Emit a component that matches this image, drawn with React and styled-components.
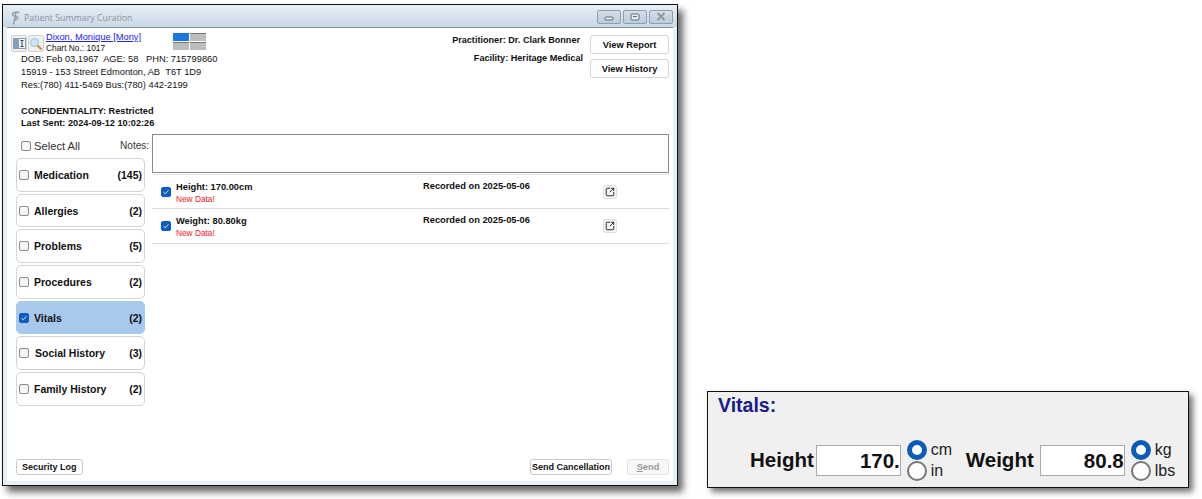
import React from 'react'
import styled, { createGlobalStyle } from 'styled-components';
import { SquareArrowOutUpRight } from 'lucide-react';

const categories = [
	{ name: 'Medication', count: 145 },
	{ name: 'Allergies', count: 2 },
	{ name: 'Problems', count: 5 },
	{ name: 'Procedures', count: 2 },
	{ name: 'Vitals', count: 2, active: true },
	{ name: 'Social History', count: 3, nudge: true },
	{ name: 'Family History', count: 2 },
];

const vitals = [
	{ label: 'Height: 170.00cm', date: 'Recorded on 2025-05-06' },
	{ label: 'Weight: 80.80kg', date: 'Recorded on 2025-05-06' },
];

const Check = ({ checked }) => (
	<CheckBox $checked={checked}>
		{checked && (
			<svg width="8" height="8" viewBox="0 0 8 8">
				<path d="M1.5 4.2 L3.2 5.8 L6.5 2.2" fill="none" stroke="#cfe0f5" strokeWidth="1" />
			</svg>
		)}
	</CheckBox>
);

const App = () => {
	return (
		<Page>
			<GlobalStyle />
			<Window>
				<TitleBar>
					<TitleLeft>
						<svg width="11" height="14" viewBox="0 0 11 14">
							<path d="M9.5 1.5 C5 0.5 1.5 2 2.5 4 C3.5 6 8 5 8 7 C8 8.5 5 8 4 9.5 M6 2 L3.5 13.5" fill="none" stroke="#8c959d" strokeWidth="1.3" />
						</svg>
						<TitleText>Patient Summary Curation</TitleText>
					</TitleLeft>
					<WindowButtons>
						<WindowButton>
							<svg width="10" height="8" viewBox="0 0 10 8"><rect x="1" y="4" width="8" height="3" rx="1" fill="#e8eef3" stroke="#5f6b75" /></svg>
						</WindowButton>
						<WindowButton>
							<svg width="10" height="8" viewBox="0 0 10 8"><rect x="1" y="1" width="8" height="6" rx="1" fill="#e8eef3" stroke="#5f6b75" /><rect x="3" y="3" width="4" height="1" fill="#5f6b75" /></svg>
						</WindowButton>
						<WindowButton>
							<svg width="10" height="9" viewBox="0 0 10 9"><path d="M1.5 1 L8.5 8 M8.5 1 L1.5 8" stroke="#8d979f" strokeWidth="2" /></svg>
						</WindowButton>
					</WindowButtons>
				</TitleBar>
				<Content>
					<Header>
						<PatientColumn>
							<NameRow>
								<IconButton>
									<svg width="13" height="13" viewBox="0 0 13 13">
										<rect x="0.5" y="1.5" width="5" height="10" fill="#7f9fc4" stroke="#8c9cad" />
										<rect x="5.5" y="1.5" width="7" height="10" fill="#f2f4f6" stroke="#8c9cad" />
										<path d="M7.5 3.5 H10.5 M9 3.5 V9.5 M7.5 9.5 H10.5" stroke="#33475c" />
									</svg>
								</IconButton>
								<IconButton>
									<svg width="14" height="14" viewBox="0 0 14 14">
										<circle cx="5.5" cy="5.5" r="4" fill="#cfe6f8" stroke="#9dbcd8" />
										<path d="M8.5 8.5 L12.5 12.5" stroke="#c98a3c" strokeWidth="2" />
									</svg>
								</IconButton>
								<NameBlock>
									<PatientName>Dixon, Monique [Mony]</PatientName>
									<ChartNo>Chart No.: 1017</ChartNo>
								</NameBlock>
								<LayoutPicker>
									<LayoutCell $on />
									<LayoutCell />
									<LayoutCell />
									<LayoutCell />
								</LayoutPicker>
							</NameRow>
							<Demographics>
								<div>DOB: Feb 03,1967&nbsp; AGE: 58 &nbsp; PHN: 715799860</div>
								<div>15919 - 153 Street Edmonton, AB &nbsp;T6T 1D9</div>
								<div>Res:(780) 411-5469 Bus:(780) 442-2199</div>
							</Demographics>
							<Confidential>
								<div>CONFIDENTIALITY: Restricted</div>
								<div>Last Sent: 2024-09-12 10:02:26</div>
							</Confidential>
						</PatientColumn>
						<ProviderColumn>
							<ProviderLine>Practitioner: Dr. Clark Bonner</ProviderLine>
							<ProviderLine $shift>Facility: Heritage Medical</ProviderLine>
						</ProviderColumn>
						<HeaderButtons>
							<HeaderButton>View Report</HeaderButton>
							<HeaderButton>View History</HeaderButton>
						</HeaderButtons>
					</Header>
					<Main>
						<Sidebar>
							<SelectAll>
								<Check />
								<span>Select All</span>
							</SelectAll>
							<CategoryList>
								{categories.map((cat) => (
									<CategoryCard key={cat.name} $active={cat.active}>
										<Check checked={cat.active} />
										<CategoryName $nudge={cat.nudge}>{cat.name}</CategoryName>
										<CategoryCount>({cat.count})</CategoryCount>
									</CategoryCard>
								))}
							</CategoryList>
						</Sidebar>
						<Detail>
							<NotesRow>
								<NotesLabel>Notes:</NotesLabel>
								<NotesBox />
							</NotesRow>
							<VitalList>
								{vitals.map((item) => (
									<VitalRow key={item.label}>
										<Check checked />
										<VitalInfo>
											<VitalLabel>{item.label}</VitalLabel>
											<NewData>New Data!</NewData>
										</VitalInfo>
										<VitalDate>{item.date}</VitalDate>
										<OpenButton>
											<SquareArrowOutUpRight size={10} strokeWidth={2.2} color="#222" />
										</OpenButton>
									</VitalRow>
								))}
							</VitalList>
						</Detail>
					</Main>
					<Footer>
						<FooterButton $pad={5}>Security Log</FooterButton>
						<FooterRight>
							<FooterButton $pad={1}>Send Cancellation</FooterButton>
							<SendButton disabled><u>S</u>end</SendButton>
						</FooterRight>
					</Footer>
				</Content>
			</Window>
			<VitalsPanel>
				<VitalsTitle>Vitals:</VitalsTitle>
				<Measures>
					<Measure>
						<MeasureLabel $gap={2}>Height</MeasureLabel>
						<MeasureInput>170.</MeasureInput>
						<UnitGroup>
							<Unit><Radio $on />cm</Unit>
							<Unit><Radio />in</Unit>
						</UnitGroup>
					</Measure>
					<Measure>
						<MeasureLabel $gap={6}>Weight</MeasureLabel>
						<MeasureInput>80.8</MeasureInput>
						<UnitGroup>
							<Unit><Radio $on />kg</Unit>
							<Unit><Radio />lbs</Unit>
						</UnitGroup>
					</Measure>
				</Measures>
			</VitalsPanel>
		</Page>
	);
}

export default App


const GlobalStyle = createGlobalStyle`
	html, body {
		margin: 0;
		background: #fff;
		overflow: hidden;
	}
	body, button {
		font-family: "Liberation Sans", Arial, sans-serif;
		color: #111;
	}
`;

const Page = styled.div`
	width: 1202px;
	height: 499px;
	display: flex;
	align-items: flex-start;
	padding: 4px 0 0 2px;
	box-sizing: border-box;
	background: #fff;
`;

const Window = styled.div`
	width: 676px;
	height: 482px;
	box-sizing: border-box;
	flex-shrink: 0;
	border: 1px solid #111;
	background: #e6eef6;
	box-shadow: 5px 6px 7px rgba(0, 0, 0, 0.6);
	display: flex;
	flex-direction: column;
	padding: 0 4px 4px;
`;

const TitleBar = styled.div`
	height: 22px;
	margin: 0 -4px;
	padding: 0 4px 0 7px;
	flex-shrink: 0;
	display: flex;
	align-items: center;
	justify-content: space-between;
	background: linear-gradient(#e9eff4, #c8d8e6);
`;

const TitleLeft = styled.div`
	display: flex;
	align-items: center;
	gap: 3px;
	margin-top: 3px;
`;

const TitleText = styled.span`
	font-family: "Open Sans", sans-serif;
	font-size: 8.8px;
	color: #8b959e;
`;

const WindowButtons = styled.div`
	display: flex;
	gap: 2px;
	margin-top: 1px;
`;

const WindowButton = styled.div`
	width: 24px;
	height: 14px;
	box-sizing: border-box;
	border: 1px solid #8b9db0;
	border-radius: 2px;
	background: linear-gradient(#d3dfe9, #bccddc);
	display: flex;
	align-items: center;
	justify-content: center;
`;

const Content = styled.div`
	flex: 1;
	min-height: 0;
	background: #fff;
	border-top: 1px solid #7f8c98;
	display: flex;
	flex-direction: column;
	padding: 0 4px 5px 3px;
`;

const Header = styled.div`
	display: flex;
	height: 106px;
	flex-shrink: 0;
`;

const PatientColumn = styled.div`
	flex: 1;
`;

const NameRow = styled.div`
	display: flex;
	align-items: flex-start;
	padding: 5px 0 0 1px;
	height: 24px;
	box-sizing: border-box;
`;

const IconButton = styled.div`
	width: 16px;
	height: 17px;
	box-sizing: border-box;
	margin-top: 2px;
	margin-right: 1px;
	border: 1px solid #d0d0d0;
	border-radius: 2px;
	background: #f0f0f0;
	display: flex;
	align-items: center;
	justify-content: center;
`;

const NameBlock = styled.div`
	width: 127px;
	margin: -1px 0 0 1px;
	line-height: 11px;
`;

const PatientName = styled.a`
	display: block;
	color: #2222ee;
	text-decoration: underline;
	font-size: 9.3px;
`;

const ChartNo = styled.div`
	font-size: 8.4px;
`;

const LayoutPicker = styled.div`
	display: grid;
	grid-template-columns: 16px 16px;
	grid-auto-rows: 8px;
	gap: 1px 1px;
`;

const LayoutCell = styled.div`
	background: ${({ $on }) => ($on ? '#1a78e0' : '#bdbdbd')};
	border-top: 1px solid ${({ $on }) => ($on ? '#1a78e0' : '#777')};
`;

const Demographics = styled.div`
	margin: 1px 0 0 11px;
	line-height: 13px;
	font-size: 9.3px;
	white-space: nowrap;
`;

const Confidential = styled.div`
	margin: 13px 0 0 11px;
	line-height: 12px;
	font-size: 9.2px;
	font-weight: bold;
`;

const ProviderColumn = styled.div`
	display: flex;
	flex-direction: column;
	align-items: flex-end;
	font-size: 9.1px;
	font-weight: bold;
	padding-top: 7px;
	margin-right: 7px;
	gap: 7px;
`;

const ProviderLine = styled.div`
	line-height: 11px;
	margin-right: ${({ $shift }) => ($shift ? '0' : '3px')};
`;

const HeaderButtons = styled.div`
	display: flex;
	flex-direction: column;
	gap: 5px;
	padding-top: 7px;
`;

const HeaderButton = styled.button`
	width: 79px;
	height: 19px;
	padding: 0;
	border: 1px solid #d4d4d4;
	border-radius: 3px;
	background: #fff;
	font-size: 9.3px;
	font-weight: bold;
`;

const Main = styled.div`
	flex: 1;
	min-height: 0;
	display: flex;
`;

const Sidebar = styled.div`
	width: 129px;
	margin-left: 6px;
	flex-shrink: 0;
`;

const SelectAll = styled.div`
	display: flex;
	align-items: center;
	gap: 3px;
	height: 24px;
	padding: 0 0 1px 5px;
	box-sizing: border-box;
	font-size: 11.2px;
	color: #333;
`;

const CategoryList = styled.div`
	display: flex;
	flex-direction: column;
	gap: 2px;
`;

const CategoryCard = styled.div`
	height: 33.7px;
	box-sizing: border-box;
	padding: 0 2px;
	display: flex;
	align-items: center;
	border: 1px solid ${({ $active }) => ($active ? '#a8c9ee' : '#d4d4d4')};
	border-radius: 5px;
	background: ${({ $active }) => ($active ? '#a8c9ee' : '#fff')};
	font-size: 10.5px;
	font-weight: bold;
`;

const CategoryName = styled.span`
	flex: 1;
	margin-left: ${({ $nudge }) => ($nudge ? '6px' : '5px')};
`;

const CategoryCount = styled.span``;

const CheckBox = styled.span`
	width: 10px;
	height: 10px;
	flex-shrink: 0;
	box-sizing: border-box;
	border-radius: 2px;
	border: 1px solid ${({ $checked }) => ($checked ? '#0f5cc0' : '#8a8a8a')};
	background: ${({ $checked }) => ($checked ? '#0f5cc0' : '#f6f6f6')};
	display: inline-flex;
	align-items: center;
	justify-content: center;
`;

const Detail = styled.div`
	flex: 1;
	min-width: 0;
	margin-left: -25px;
	display: flex;
	flex-direction: column;
`;

const NotesRow = styled.div`
	display: flex;
	align-items: flex-start;
	height: 40px;
	flex-shrink: 0;
`;

const NotesLabel = styled.label`
	width: 32px;
	font-size: 10px;
	color: #333;
	margin-top: 6px;
	text-align: right;
	padding-right: 3px;
	margin-left: -3px;
`;

const NotesBox = styled.div`
	flex: 1;
	height: 39px;
	box-sizing: border-box;
	border: 1px solid #8a8a8a;
`;

const VitalList = styled.div`
	margin-left: 32px;
	border-top: 1px solid #e4e4e4;
`;

const VitalRow = styled.div`
	height: 34.25px;
	box-sizing: border-box;
	padding: 0 52px 0 9px;
	display: flex;
	align-items: center;
	border-bottom: 1px solid #dcdcdc;
`;

const VitalInfo = styled.div`
	width: 247px;
	margin-left: 5px;
	padding-top: 2px;
`;

const VitalLabel = styled.div`
	font-size: 9.3px;
	font-weight: bold;
	line-height: 12px;
`;

const NewData = styled.div`
	font-size: 8.3px;
	line-height: 12px;
	color: #f0202a;
`;

const VitalDate = styled.div`
	flex: 1;
	font-size: 9.3px;
	font-weight: bold;
	line-height: 12px;
	margin-bottom: 11px;
`;

const OpenButton = styled.div`
	width: 14px;
	height: 14px;
	box-sizing: border-box;
	border: 1px solid #ddd;
	border-radius: 3px;
	background: #f4f4f4;
	display: flex;
	align-items: center;
	justify-content: center;
`;

const Footer = styled.div`
	display: flex;
	align-items: center;
	justify-content: space-between;
	padding-left: 6px;
	height: 16px;
	flex-shrink: 0;
	margin-bottom: 1px;
`;

const FooterRight = styled.div`
	display: flex;
	align-items: center;
	gap: 15px;
`;

const FooterButton = styled.button`
	height: 16px;
	padding: 0 ${({ $pad }) => $pad}px;
	border: 1px solid #c8c8c8;
	border-radius: 3px;
	background: #fff;
	font-size: 9px;
	font-weight: bold;
`;

const SendButton = styled.button`
	width: 42px;
	height: 16px;
	padding: 0;
	border: 1px solid #e4e4e4;
	border-radius: 3px;
	background: #f7f7f7;
	font-size: 9.3px;
	font-weight: bold;
	color: #999;
`;

const VitalsPanel = styled.div`
	width: 482px;
	height: 97px;
	flex-shrink: 0;
	box-sizing: border-box;
	margin: 387px 0 0 29px;
	border: 1px solid #111;
	background: #f0f0f0;
	box-shadow: 4px 4px 6px rgba(0, 0, 0, 0.55);
	padding: 3px 0 0 10px;
`;

const VitalsTitle = styled.div`
	font-size: 19.5px;
	font-weight: bold;
	color: #1a1a8a;
	line-height: 20px;
`;

const Measures = styled.div`
	display: flex;
	margin-top: 24px;
	padding-left: 32px;
	gap: 12px;
`;

const Measure = styled.div`
	display: flex;
	align-items: center;
`;

const MeasureLabel = styled.div`
	font-size: 20.5px;
	font-weight: bold;
	margin-right: ${({ $gap }) => $gap}px;
`;

const MeasureInput = styled.div`
	width: 85px;
	height: 31px;
	box-sizing: border-box;
	border: 1px solid #aaa;
	background: #fff;
	font-size: 20.5px;
	font-weight: bold;
	line-height: 29px;
	text-align: right;
`;

const UnitGroup = styled.div`
	display: flex;
	flex-direction: column;
	width: 47px;
	margin-left: 6px;
`;

const Unit = styled.div`
	display: flex;
	align-items: center;
	gap: 4px;
	height: 21px;
	font-size: 16px;
	color: #222;
`;

const Radio = styled.span`
	width: 20px;
	height: 20px;
	box-sizing: border-box;
	border-radius: 50%;
	background: #fff;
	border: ${({ $on }) => ($on ? '5px solid #0a5cb8' : '2px solid #777')};
`;
